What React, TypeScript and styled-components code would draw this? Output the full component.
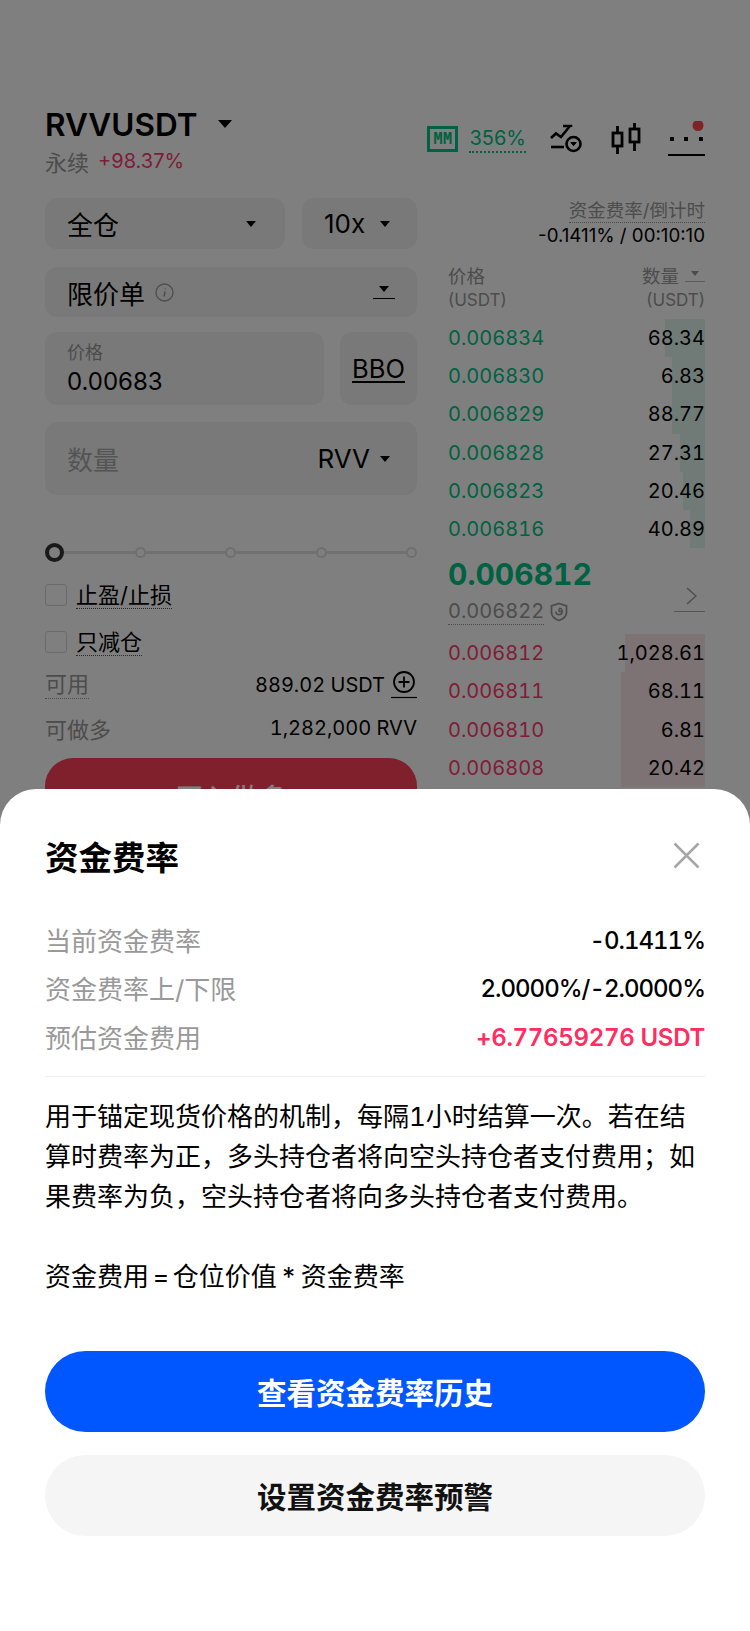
import * as React from "react";
import styled, { createGlobalStyle } from "styled-components";

const GlobalStyle = createGlobalStyle`
  html, body {
    margin: 0;
    padding: 0;
    background: #fff;
  }
  * {
    box-sizing: border-box;
  }
  body {
    font-family: Inter, "Noto Sans CJK SC", "Noto Sans", sans-serif;
    color: #000;
  }
`;

const GREEN = "#00c484";
const RED = "#ff2d60";
const PAGE_RED = "#ff3a70";

const Page = styled.div`
  position: relative;
  width: 750px;
  height: 1631px;
  overflow: hidden;
  padding: 104px 45px 0;
`;

const Header = styled.div`
  display: flex;
  justify-content: space-between;
  align-items: flex-start;
  height: 72px;
`;

const Symbol = styled.div`
  display: flex;
  align-items: center;
  height: 40px;
  gap: 20px;
  font-size: 31.500px;
  font-weight: 600;
`;

const SubRow = styled.div`
  display: flex;
  align-items: center;
  gap: 9px;
  height: 34px;
  font-size: 20px;
`;

const Muted = styled.span`
  color: #999;
  font-size: 22px;
`;

const Change = styled.span`
  color: ${PAGE_RED};
`;

const Tools = styled.div`
  display: flex;
  align-items: center;
  height: 36px;
  margin-top: 17px;
`;

const MmBadge = styled.span`
  display: flex;
  align-items: center;
  justify-content: center;
  width: 31px;
  height: 26px;
  border: 3px solid ${GREEN};
  color: ${GREEN};
  font-family: "DejaVu Sans Mono", monospace;
  font-size: 15px;
  font-weight: 700;
  letter-spacing: 0.5px;
`;

const MmValue = styled.span`
  margin-left: 11px;
  color: ${GREEN};
  font-size: 20px;
  line-height: 26px;
  border-bottom: 2px dotted ${GREEN};
`;

const ToolIcon = styled.svg<{ $left: number }>`
  display: block;
  flex: none;
  margin-left: ${p => p.$left}px;
`;

const Caret = styled.span<{ $size?: number; $color?: string }>`
  display: block;
  flex: none;
  width: 0;
  height: 0;
  border-left: ${p => p.$size ?? 6}px solid transparent;
  border-right: ${p => p.$size ?? 6}px solid transparent;
  border-top: ${p => Math.round((p.$size ?? 6) * 1.2)}px solid ${p => p.$color ?? "#000"};
`;

const Columns = styled.div`
  display: grid;
  grid-template-columns: 372px 257px;
  column-gap: 31px;
  margin-top: 22px;
`;

const LeftColumn = styled.div`
  display: flex;
  flex-direction: column;
`;

const Row = styled.div<{ $gap?: number; $top?: number }>`
  display: flex;
  gap: ${p => p.$gap ?? 0}px;
  margin-top: ${p => p.$top ?? 0}px;
`;

const Field = styled.div<{ $width?: number; $height?: number; $center?: boolean; $endPad?: number }>`
  display: flex;
  align-items: center;
  justify-content: ${p => (p.$center ? "center" : "space-between")};
  flex: ${p => (p.$width ? "none" : "1")};
  width: ${p => (p.$width ? `${p.$width}px` : "auto")};
  height: ${p => p.$height ?? 51}px;
  padding: ${p => (p.$center ? "0" : `0 ${p.$endPad ?? 22}px 0 22px`)};
  background: #f3f3f3;
  border-radius: 12px;
  font-size: 26px;
  font-weight: 400;
`;

const Latin = styled.span`
  font-size: 26px;
`;

const FieldLabel = styled.span`
  display: flex;
  align-items: center;
  gap: 10px;
`;

const Underlined = styled.span`
  display: flex;
  justify-content: center;
  width: 22px;
  padding-bottom: 6px;
  border-bottom: 1px solid #000;
`;

const Stack = styled.div`
  display: flex;
  flex-direction: column;
`;

const TinyLabel = styled.span`
  color: #999;
  font-size: 18px;
  line-height: 24px;
`;

const PriceValue = styled.span`
  margin-top: 2px;
  font-size: 24px;
  line-height: 30px;
`;

const Bbo = styled.span`
  font-size: 25.500px;
  text-decoration: underline;
  text-underline-offset: 3px;
`;

const Placeholder = styled.span`
  color: #a8a8a8;
`;

const Slider = styled.div`
  display: flex;
  align-items: center;
  height: 20px;
  margin-top: 47px;
`;

const Knob = styled.span`
  position: relative;
  z-index: 1;
  flex: none;
  width: 19px;
  height: 19px;
  margin-right: -9px;
  border: 4px solid #333;
  border-radius: 50%;
  background: #fff;
`;

const Track = styled.span`
  flex: 1;
  height: 3px;
  background: #e2e2e2;
`;

const Stop = styled.span`
  flex: none;
  width: 11px;
  height: 11px;
  border: 2px solid #dedede;
  border-radius: 50%;
  background: #fff;
`;

const CheckRow = styled.div<{ $top: number }>`
  display: flex;
  align-items: center;
  gap: 9px;
  height: 34px;
  margin-top: ${p => p.$top}px;
  font-size: 22px;
`;

const CheckBox = styled.span`
  flex: none;
  width: 22px;
  height: 22px;
  border: 1.5px solid #d6d6d6;
  border-radius: 3px;
`;

const Dotted = styled.span<{ $color?: string }>`
  line-height: 26px;
  color: ${p => p.$color ?? "#000"};
  border-bottom: 1.5px dotted ${p => p.$color ?? "#555"};
`;

const InfoRow = styled.div`
  display: flex;
  align-items: center;
  justify-content: space-between;
  height: 34px;
  margin-top: 9px;
  font-size: 20px;
  font-variant-numeric: tabular-nums;
`;

const InfoValue = styled.span`
  display: flex;
  align-items: center;
  gap: 6px;
`;

const GreyText = styled.span`
  color: #999;
  font-size: 22px;
`;

const BuyButton = styled.div`
  display: flex;
  justify-content: center;
  height: 80px;
  margin-top: 13px;
  padding-top: 19px;
  background: #ff4158;
  border-radius: 28px;
  color: #fff;
  font-size: 28px;
  font-weight: 500;
`;

const RightColumn = styled.div`
  display: flex;
  flex-direction: column;
`;

const Funding = styled.div`
  display: flex;
  flex-direction: column;
  align-items: flex-end;
  font-size: 18.700px;
`;

const FundingLabel = styled.span`
  color: #999;
  font-size: 18.500px;
  line-height: 24px;
  border-bottom: 1.5px dotted #999;
`;

const FundingValue = styled.span`
  margin-top: 1px;
  line-height: 24px;
`;

const BookHead = styled.div`
  display: flex;
  justify-content: space-between;
  margin-top: 16px;
  height: 55px;
  color: #999;
  font-size: 18.500px;
  line-height: 24px;
`;

const BookColumn = styled.div<{ $right?: boolean }>`
  display: flex;
  flex-direction: column;
  align-items: ${p => (p.$right ? "flex-end" : "flex-start")};
`;

const UnitLabel = styled.span`
  font-size: 17px;
`;

const QtyLabel = styled.span`
  display: flex;
  align-items: center;
  gap: 6px;
`;

const SmallUnder = styled.span`
  display: flex;
  justify-content: center;
  width: 20px;
  padding-bottom: 5px;
  border-bottom: 1px solid #bbb;
`;

const BookRows = styled.div`
  display: flex;
  flex-direction: column;
`;

const BookRow = styled.div<{ $tone: string }>`
  position: relative;
  display: flex;
  justify-content: space-between;
  align-items: center;
  height: 38.200px;
  font-size: 20px;
  font-variant-numeric: tabular-nums;
  color: #000;

  span:first-of-type {
    color: ${p => p.$tone};
  }
`;

const DepthBar = styled.i<{ $width: number; $tone: string }>`
  position: absolute;
  top: 0;
  right: 0;
  bottom: 0;
  width: ${p => p.$width}px;
  background: ${p => p.$tone};
`;

const Cell = styled.span`
  position: relative;
`;

const Mid = styled.div`
  display: flex;
  justify-content: space-between;
  align-items: flex-end;
  height: 86px;
  padding-top: 6px;
  padding-bottom: 9px;
`;

const MidPrice = styled.div`
  color: ${GREEN};
  font-size: 30px;
  font-weight: 700;
  font-variant-numeric: tabular-nums;
  line-height: 40px;
`;

const MarkRow = styled.div`
  display: flex;
  align-items: center;
  gap: 6px;
  margin-top: 4px;
  font-size: 20px;
  font-variant-numeric: tabular-nums;
`;

const MidArrow = styled.span`
  display: block;
  padding: 0 8px 2px 12px;
  border-bottom: 1px solid #aaa;
  margin-bottom: 13px;
`;

const Scrim = styled.div`
  position: absolute;
  inset: 0;
  z-index: 2;
  background: rgba(0, 0, 0, 0.5);
`;

const Sheet = styled.div`
  position: absolute;
  left: 0;
  right: 0;
  bottom: 0;
  z-index: 3;
  height: 842px;
  padding: 0 45px;
  background: #fff;
  border-radius: 36px 36px 0 0;
`;

const SheetHeader = styled.div`
  display: flex;
  align-items: center;
  justify-content: space-between;
  height: 46px;
  margin-top: 43px;
`;

const SheetTitle = styled.h2`
  margin: 0;
  font-size: 33.500px;
  font-weight: 700;
`;

const CloseIcon = styled.svg`
  display: block;
  margin-right: 5px;
`;

const FactList = styled.div`
  display: flex;
  flex-direction: column;
  margin-top: 37px;
  padding-bottom: 15px;
  border-bottom: 1px solid #efefef;
`;

const Fact = styled.div`
  display: flex;
  justify-content: space-between;
  align-items: center;
  height: 48.500px;
`;

const FactLabel = styled.span`
  color: #999;
  font-size: 26px;
`;

const FactValue = styled.span<{ $tone?: string }>`
  position: relative;
  top: 1px;
  color: ${p => p.$tone ?? "#000"};
  font-size: 24px;
  font-weight: ${p => (p.$tone ? 600 : 500)};
  font-variant-numeric: tabular-nums;
  letter-spacing: ${p => (p.$tone ? "-0.3px" : "-1px")};
`;

const Body = styled.p`
  margin: 20px 0 0;
  font-size: 26px;
  font-variant-numeric: tabular-nums;
  line-height: 40px;
  word-spacing: -3.500px;
`;

const Actions = styled.div`
  display: flex;
  flex-direction: column;
  gap: 23px;
  margin-top: 54px;
`;

const ActionButton = styled.div<{ $primary?: boolean }>`
  display: flex;
  align-items: center;
  justify-content: center;
  height: 81px;
  border-radius: 41px;
  background: ${p => (p.$primary ? "#0056ff" : "#f5f5f5")};
  color: ${p => (p.$primary ? "#fff" : "#111")};
  font-size: 29.500px;
  font-weight: 700;
`;

const asks = [
  { price: "0.006834", qty: "68.34", depth: 40 },
  { price: "0.006830", qty: "6.83", depth: 33 },
  { price: "0.006829", qty: "88.77", depth: 33 },
  { price: "0.006828", qty: "27.31", depth: 25 },
  { price: "0.006823", qty: "20.46", depth: 22 },
  { price: "0.006816", qty: "40.89", depth: 15 }
];

const bids = [
  { price: "0.006812", qty: "1,028.61", depth: 80 },
  { price: "0.006811", qty: "68.11", depth: 84 },
  { price: "0.006810", qty: "6.81", depth: 84 },
  { price: "0.006808", qty: "20.42", depth: 84 }
];

const OrderBook = () => (
  <>
    <BookRows>
      {asks.map(row => (
        <BookRow key={row.price} $tone={GREEN}>
          <DepthBar $width={row.depth} $tone="#e0f7ef" />
          <Cell>{row.price}</Cell>
          <Cell>{row.qty}</Cell>
        </BookRow>
      ))}
    </BookRows>
    <Mid>
      <div>
        <MidPrice>0.006812</MidPrice>
        <MarkRow>
          <Dotted $color="#999">0.006822</Dotted>
          <svg width="18" height="20" viewBox="0 0 18 20" fill="none" stroke="#999" strokeWidth="1.800">
            <path d="M9 1.500 16.500 4v6.500c0 4-3.500 6.500-7.500 8-4-1.500-7.500-4-7.500-8V4Z" />
            <path d="M9 6.300a3.200 3.200 0 1 1-3.200 3.200M9 6.800v2.700h2.700" strokeWidth="1.500" />
          </svg>
        </MarkRow>
      </div>
      <MidArrow>
        <svg width="11" height="18" viewBox="0 0 11 18" fill="none" stroke="#999" strokeWidth="1.500">
          <path d="M1 1l9 8-9 8" />
        </svg>
      </MidArrow>
    </Mid>
    <BookRows>
      {bids.map(row => (
        <BookRow key={row.price} $tone={PAGE_RED}>
          <DepthBar $width={row.depth} $tone="#fbe6e9" />
          <Cell>{row.price}</Cell>
          <Cell>{row.qty}</Cell>
        </BookRow>
      ))}
    </BookRows>
  </>
);

const App = () => (
  <Page>
    <GlobalStyle />
    <Header>
      <div>
        <Symbol>
          RVVUSDT
          <Caret $size={7} />
        </Symbol>
        <SubRow>
          <Muted>永续</Muted>
          <Change>+98.37%</Change>
        </SubRow>
      </div>
      <Tools>
        <MmBadge>MM</MmBadge>
        <MmValue>356%</MmValue>
        <ToolIcon $left={24} width="32" height="30" viewBox="0 0 32 30" fill="none" stroke="#000" strokeWidth="2.600">
          <path d="M1 14 6 9.500l5 3.500L19.500 2.500" />
          <path d="M13 2h8v1" />
          <path d="M1 23h13" />
          <circle cx="23.500" cy="20" r="7" />
          <path d="M20.800 18.500h5.400l-2.700 3.200Z" fill="#000" strokeWidth="1" />
        </ToolIcon>
        <ToolIcon $left={29} width="30" height="32" viewBox="0 0 30 32" fill="none" stroke="#000" strokeWidth="2.800">
          <rect x="2" y="10" width="9" height="13" />
          <path d="M6.500 3v7M6.500 23v8" />
          <rect x="19" y="6" width="9" height="13" />
          <path d="M23.500 0v6M23.500 19v9" />
        </ToolIcon>
        <ToolIcon $left={27} width="37" height="36" viewBox="0 0 37 36">
          <rect x="2" y="16" width="4" height="4" />
          <rect x="16" y="16" width="4" height="4" />
          <rect x="31" y="16" width="4" height="4" />
          <circle cx="30" cy="4.500" r="5.500" fill="#ff4848" />
          <path d="M0 34h37" stroke="#000" strokeWidth="2" />
        </ToolIcon>
      </Tools>
    </Header>
    <Columns>
      <LeftColumn>
        <Row $gap={17}>
          <Field $endPad={29}>
            全仓
            <Caret $size={5} />
          </Field>
          <Field $width={115} $endPad={27}>
            <Latin>10x</Latin>
            <Caret $size={5} />
          </Field>
        </Row>
        <Row $top={18}>
          <Field $height={50}>
            <FieldLabel>
              限价单
              <svg width="19" height="19" viewBox="0 0 19 19" fill="none" stroke="#999" strokeWidth="1.300">
                <circle cx="9.500" cy="9.500" r="8.500" />
                <path d="M10 8.500 9 13.500M10.200 5.500v.8" strokeWidth="1.500" />
              </svg>
            </FieldLabel>
            <Underlined>
              <Caret $size={5} />
            </Underlined>
          </Field>
        </Row>
        <Row $gap={16} $top={15}>
          <Field $height={73}>
            <Stack>
              <TinyLabel>价格</TinyLabel>
              <PriceValue>0.00683</PriceValue>
            </Stack>
          </Field>
          <Field $width={77} $height={73} $center>
            <Bbo>BBO</Bbo>
          </Field>
        </Row>
        <Row $top={17}>
          <Field $height={73} $endPad={27}>
            <Placeholder>数量</Placeholder>
            <FieldLabel>
              <Latin>RVV</Latin>
              <Caret $size={5} />
            </FieldLabel>
          </Field>
        </Row>
        <Slider>
          <Knob />
          <Track />
          <Stop />
          <Track />
          <Stop />
          <Track />
          <Stop />
          <Track />
          <Stop />
        </Slider>
        <CheckRow $top={16}>
          <CheckBox />
          <Dotted>止盈/止损</Dotted>
        </CheckRow>
        <CheckRow $top={13}>
          <CheckBox />
          <Dotted>只减仓</Dotted>
        </CheckRow>
        <InfoRow>
          <Dotted $color="#999">
            <GreyText>可用</GreyText>
          </Dotted>
          <InfoValue>
            889.02 USDT
            <svg width="26" height="28" viewBox="0 0 26 28" fill="none" stroke="#000" strokeWidth="1.800">
              <circle cx="13" cy="11" r="10" />
              <path d="M13 5.500v11M7.500 11h11" />
              <path d="M0 26.500h26" strokeWidth="1.200" />
            </svg>
          </InfoValue>
        </InfoRow>
        <InfoRow>
          <GreyText>可做多</GreyText>
          <span>1,282,000 RVV</span>
        </InfoRow>
        <BuyButton>买入做多</BuyButton>
      </LeftColumn>
      <RightColumn>
        <Funding>
          <FundingLabel>资金费率/倒计时</FundingLabel>
          <FundingValue>-0.1411% / 00:10:10</FundingValue>
        </Funding>
        <BookHead>
          <BookColumn>
            <span>价格</span>
            <UnitLabel>(USDT)</UnitLabel>
          </BookColumn>
          <BookColumn $right>
            <QtyLabel>
              数量
              <SmallUnder>
                <Caret $size={4} $color="#999" />
              </SmallUnder>
            </QtyLabel>
            <UnitLabel>(USDT)</UnitLabel>
          </BookColumn>
        </BookHead>
        <OrderBook />
      </RightColumn>
    </Columns>
    <Scrim />
    <Sheet>
      <SheetHeader>
        <SheetTitle>资金费率</SheetTitle>
        <CloseIcon width="27" height="27" viewBox="0 0 27 27" fill="none" stroke="#a6a6a6" strokeWidth="2.500">
          <path d="M1.500 1.500l24 24M25.500 1.500l-24 24" />
        </CloseIcon>
      </SheetHeader>
      <FactList>
        <Fact>
          <FactLabel>当前资金费率</FactLabel>
          <FactValue>-0.1411%</FactValue>
        </Fact>
        <Fact>
          <FactLabel>资金费率上/下限</FactLabel>
          <FactValue>2.0000%/-2.0000%</FactValue>
        </Fact>
        <Fact>
          <FactLabel>预估资金费用</FactLabel>
          <FactValue $tone={RED}>+6.77659276 USDT</FactValue>
        </Fact>
      </FactList>
      <Body>
        用于锚定现货价格的机制，每隔1小时结算一次。若在结算时费率为正，多头持仓者将向空头持仓者支付费用；如果费率为负，空头持仓者将向多头持仓者支付费用。
        <br />
        <br />
        资金费用 = 仓位价值 * 资金费率
      </Body>
      <Actions>
        <ActionButton $primary>查看资金费率历史</ActionButton>
        <ActionButton>设置资金费率预警</ActionButton>
      </Actions>
    </Sheet>
  </Page>
);

export default App;
